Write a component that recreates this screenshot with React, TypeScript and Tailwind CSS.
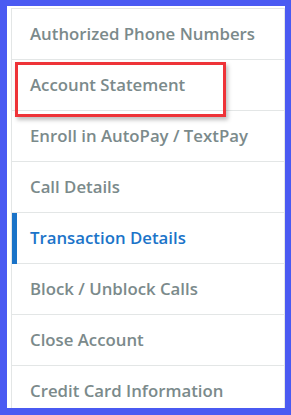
const items = [
  "Authorized Phone Numbers",
  "Account Statement",
  "Enroll in AutoPay / TextPay",
  "Call Details",
  "Transaction Details",
  "Block / Unblock Calls",
  "Close Account",
  "Credit Card Information",
];

export default function App() {
  return (
    <div
      className="relative w-[291px] h-[415px] overflow-hidden bg-white border-[#4a5af2] border-l-[7px] border-t-[6px] border-r-[6px] border-b-[7px] pl-[4px] pt-[2px]"
      style={{ fontFamily: '"Open Sans", "Liberation Sans", sans-serif' }}
    >
      <ul className="border-l border-t border-r border-[#e3e6e6] bg-white">
        {items.map((label) => {
          const active = label === "Transaction Details";
          return (
            <li
              key={label}
              className="relative flex items-center h-[51px] border-b border-[#e3e6e6] pl-[18px]"
            >
              {active && <span className="absolute left-0 top-0 bottom-[-1px] w-[5px] bg-[#1a73c8]" />}
              <span
                className={
                  active
                    ? "text-[16.8px] font-semibold text-[#1b74c9]"
                    : "text-[16.8px] font-semibold text-[#7b8a8b]"
                }
              >
                {label}
              </span>
            </li>
          );
        })}
      </ul>

      {/* highlight box */}
      <div className="absolute left-[8px] top-[56px] w-[211px] h-[55px] border-[3px] border-[#ee3338] shadow-[2px_3px_4px_rgba(0,0,0,0.25)]" />
    </div>
  );
}
